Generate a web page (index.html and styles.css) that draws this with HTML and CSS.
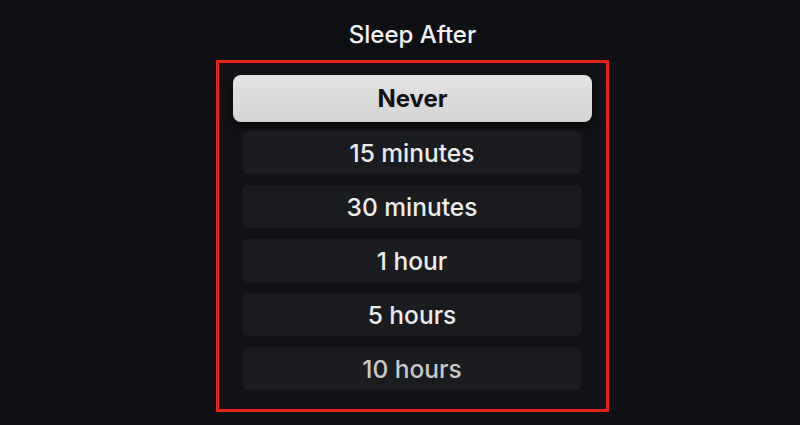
FILE: index.html
```html
<!DOCTYPE html>
<html lang="en">
<head>
  <meta charset="UTF-8" />
  <title>Sleep After</title>
  <link rel="stylesheet" href="styles.css">
</head>
<body>
  <div class="panel">
    <h1 class="title">Sleep After</h1>
    <div class="picker">
      <ul class="options">
        <li class="option focused">Never</li>
        <li class="option">15 minutes</li>
        <li class="option">30 minutes</li>
        <li class="option">1 hour</li>
        <li class="option">5 hours</li>
        <li class="option dim">10 hours</li>
      </ul>
    </div>
  </div>
</body>
</html>
```
FILE: styles.css
```css
* {
  margin: 0;
  padding: 0;
  box-sizing: border-box;
}

body {
  font-family: Inter, 'Liberation Sans', sans-serif;
  background: #0f1014;
  color: #ececec;
  height: 425px;
  overflow: hidden;
}

.panel {
  width: 393px;
  margin-left: 216px;
}

.title {
  padding-top: 20px;
  line-height: 30px;
  font-size: 24px;
  font-weight: 500;
  text-align: center;
  color: #f2f2f2;
}

.picker {
  margin-top: 10px;
  border: 3px solid #e5221b;
  background: #121317;
  padding: 12px 0 19px;
}

.options {
  list-style: none;
  display: flex;
  flex-direction: column;
  align-items: center;
  gap: 11px;
}

.option {
  width: 340px;
  height: 43px;
  line-height: 44px;
  margin-left: -1px;
  border-radius: 6px;
  background: #1b1c20;
  text-align: center;
  font-size: 24.5px;
  font-weight: 500;
}

.option.focused {
  width: 359px;
  height: 47px;
  line-height: 47px;
  margin: 0 0 -2px 0;
  border-radius: 8px;
  background: linear-gradient(to bottom, #e3e3e3, #d4d4d4);
  color: #111;
  font-weight: 700;
  font-size: 24px;
  box-shadow: 0 4px 10px rgba(0, 0, 0, 0.6);
}

.option.dim {
  color: #c9c9c9;
}
```
